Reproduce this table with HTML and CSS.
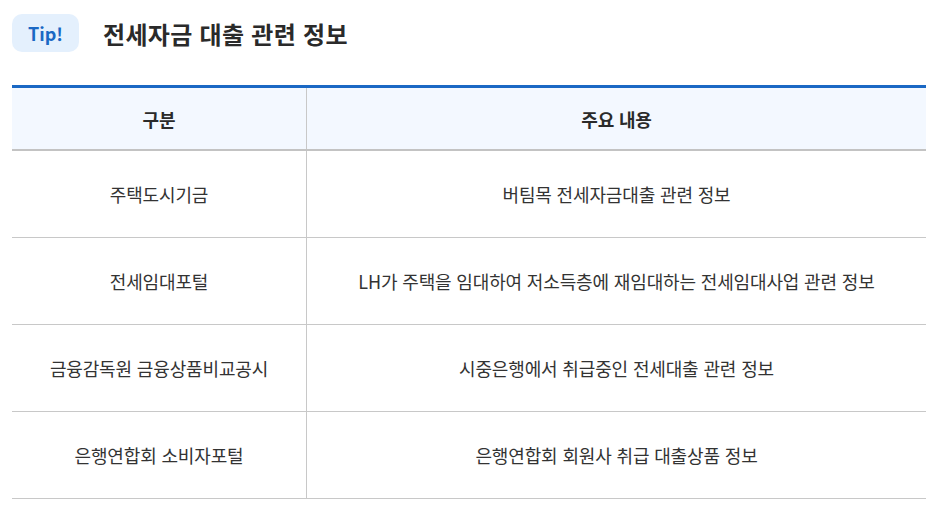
FILE: index.html
```html
<!DOCTYPE html>
<html lang="ko">
<head>
<meta charset="utf-8">
<link rel="stylesheet" href="styles.css">
</head>
<body>
<div class="page">
  <div class="heading">
    <span class="badge">Tip!</span>
    <h2 class="title">전세자금 대출 관련 정보</h2>
  </div>
  <table class="info">
    <thead>
      <tr><th class="c1">구분</th><th>주요 내용</th></tr>
    </thead>
    <tbody>
      <tr><td class="c1">주택도시기금</td><td>버팀목 전세자금대출 관련 정보</td></tr>
      <tr><td class="c1">전세임대포털</td><td>LH가 주택을 임대하여 저소득층에 재임대하는 전세임대사업 관련 정보</td></tr>
      <tr><td class="c1">금융감독원 금융상품비교공시</td><td>시중은행에서 취급중인 전세대출 관련 정보</td></tr>
      <tr><td class="c1">은행연합회 소비자포털</td><td>은행연합회 회원사 취급 대출상품 정보</td></tr>
    </tbody>
  </table>
</div>
</body>
</html>
```
FILE: styles.css
```css
html, body { margin: 0; padding: 0; background: #fff; }
body { font-family: "Noto Sans CJK KR", "Noto Sans", sans-serif; color: #333; overflow: hidden; }
.page { padding: 14px 0 0 12px; width: 914px; }
.heading { display: flex; align-items: center; gap: 24px; height: 38px; }
.badge {
  display: flex; align-items: center; justify-content: center;
  width: 67px; height: 38px; border-radius: 10px;
  background: #e4f0fd; color: #1a68c4;
  font-size: 18px; font-weight: 700; box-sizing: border-box;
}
.title { margin: 0; font-size: 24px; font-weight: 700; color: #2a2a2a; letter-spacing: 0.3px; }
.info {
  margin-top: 33px; width: 914px; border-collapse: collapse;
  border-top: 3px solid #1a68c4; table-layout: fixed;
}
.info th, .info td { text-align: center; padding: 0; font-size: 18px; letter-spacing: -0.15px; }
.info th {
  height: 61px; background: #f3f8ff; font-weight: 700; color: #2a2a2a;
  border-bottom: 2px solid #c3c3c3;
}
.info td { height: 86px; border-bottom: 1px solid #c8c8c8; color: #333; }
.info .c1 { width: 294px; border-right: 1px solid #c8c8c8; }
```
